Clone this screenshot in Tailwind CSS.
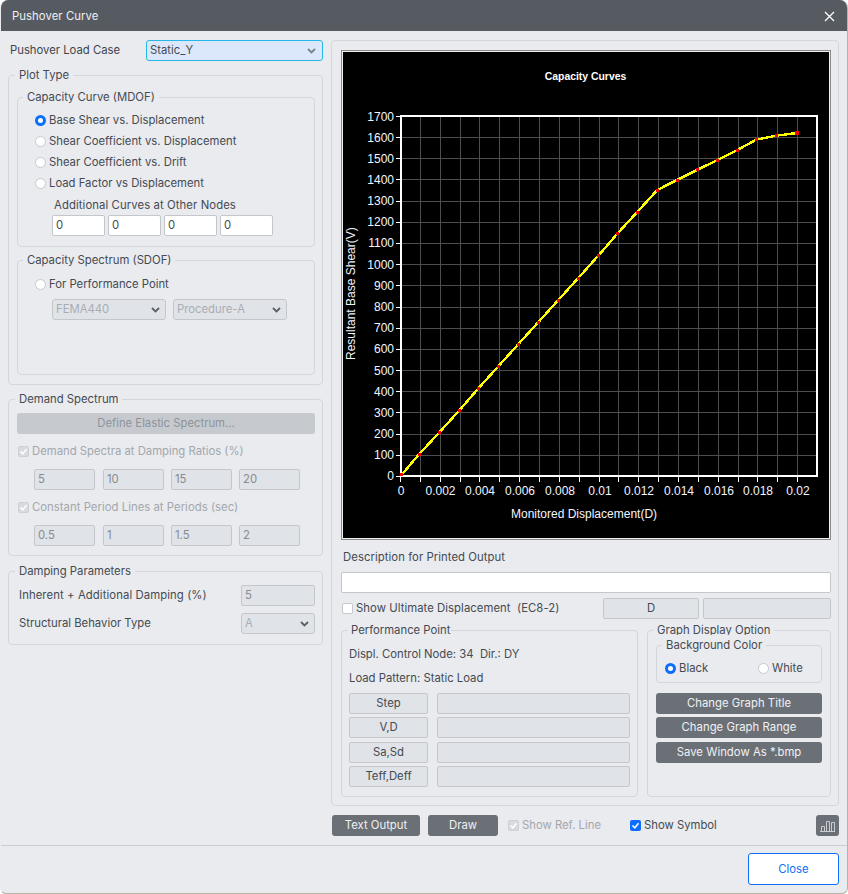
<!DOCTYPE html>
<html>
<head>
<meta charset="utf-8">
<script src="https://cdn.jsdelivr.net/npm/@tailwindcss/browser@4"></script>
</head>
<body class="bg-white">
<div class="w-[848px] h-[894px] flex flex-col bg-[#e9ebef] rounded-t-[8px] rounded-b-[6px] overflow-hidden font-['Inter',sans-serif] text-[11.3px] leading-[21px] text-[#454a52] border-r border-b border-[#b5b5a5] border-l border-l-[#e9ebef]">
  <div class="h-[31px] shrink-0 bg-[#565b62] flex items-center justify-between pl-[11px] pr-[12px] pt-px text-white">
    <span class="text-[#eef0f2] tracking-[0.08px]">Pushover Curve</span>
    <svg class="w-[11px] h-[11px]" viewBox="0 0 11 11"><path d="M1 1 L10 10 M10 1 L1 10" stroke="#ffffff" stroke-width="1.3" fill="none"/></svg>
  </div>
  <div class="flex-1 flex border-b border-[#c9ccd1]">
    <!-- left column -->
    <div class="ml-[7px] w-[315px] shrink-0">
      <div class="flex items-center mt-[9px] h-[21px]">
        <span class="ml-[2px] w-[136px] text-[#3f444c]">Pushover Load Case</span>
        <div class="w-[177px] h-[21px] flex items-center justify-between bg-[#dbe8fb] border border-[#25b8e6] rounded-[3px] pl-[3px] pr-[6px]">
          <span>Static_Y</span>
          <svg class="w-[9px] h-[6px]" viewBox="0 0 9 6"><path d="M1 1 L4.5 4.5 L8 1" stroke="#7a8087" stroke-width="1.8" fill="none"/></svg>
        </div>
      </div>

      <!-- Plot type -->
      <div class="relative mt-[14px] h-[310px] border border-[#d3d6da] rounded-[4px]">
        <span class="absolute left-[6px] -top-[11px] bg-[#e9ebef] px-[4px]">Plot Type</span>
        <div class="relative ml-[8px] mt-[21px] w-[298px] h-[150px] border border-[#d3d6da] rounded-[4px]">
          <span class="absolute left-[5px] -top-[11px] bg-[#e9ebef] px-[4px]">Capacity Curve (MDOF)</span>
          <div class="mt-[12px] ml-[17px]">
            <div class="flex items-center h-[21px]"><span class="w-[11px] h-[11px] rounded-full bg-white border-[3px] border-[#0d6efd]"></span><span class="ml-[3px]">Base Shear vs. Displacement</span></div>
            <div class="flex items-center h-[21px]"><span class="w-[11px] h-[11px] rounded-full bg-white border border-[#c6c9cd]"></span><span class="ml-[3px]">Shear Coefficient vs. Displacement</span></div>
            <div class="flex items-center h-[21px]"><span class="w-[11px] h-[11px] rounded-full bg-white border border-[#c6c9cd]"></span><span class="ml-[3px]">Shear Coefficient vs. Drift</span></div>
            <div class="flex items-center h-[21px]"><span class="w-[11px] h-[11px] rounded-full bg-white border border-[#c6c9cd]"></span><span class="ml-[3px]">Load Factor vs Displacement</span></div>
          </div>
          <div class="ml-[36px] h-[21px] leading-[22px] tracking-[0.1px]">Additional Curves at Other Nodes</div>
          <div class="ml-[34px] flex gap-[3px]">
            <div class="w-[53px] h-[21px] bg-white border border-[#c3c7cc] rounded-[2px] pl-[3px] leading-[18px]">0</div>
            <div class="w-[53px] h-[21px] bg-white border border-[#c3c7cc] rounded-[2px] pl-[3px] leading-[18px]">0</div>
            <div class="w-[53px] h-[21px] bg-white border border-[#c3c7cc] rounded-[2px] pl-[3px] leading-[18px]">0</div>
            <div class="w-[53px] h-[21px] bg-white border border-[#c3c7cc] rounded-[2px] pl-[3px] leading-[18px]">0</div>
          </div>
        </div>
        <div class="relative ml-[8px] mt-[13px] w-[298px] h-[115px] border border-[#d3d6da] rounded-[4px]">
          <span class="absolute left-[5px] -top-[11px] bg-[#e9ebef] px-[4px]">Capacity Spectrum (SDOF)</span>
          <div class="mt-[13px] ml-[17px] flex items-center h-[21px]"><span class="w-[11px] h-[11px] rounded-full bg-white border border-[#c6c9cd]"></span><span class="ml-[3px]">For Performance Point</span></div>
          <div class="mt-[4px] ml-[34px] flex gap-[7px]">
            <div class="w-[114px] h-[21px] flex items-center justify-between bg-[#e0e3e7] border border-[#c3c7cc] rounded-[3px] pl-[3px] pr-[5px] text-[#a9adb3]"><span>FEMA440</span><svg class="w-[9px] h-[6px]" viewBox="0 0 9 6"><path d="M1 1 L4.5 4.5 L8 1" stroke="#5c6168" stroke-width="1.8" fill="none"/></svg></div>
            <div class="w-[114px] h-[21px] flex items-center justify-between bg-[#e0e3e7] border border-[#c3c7cc] rounded-[3px] pl-[3px] pr-[5px] text-[#a9adb3]"><span>Procedure-A</span><svg class="w-[9px] h-[6px]" viewBox="0 0 9 6"><path d="M1 1 L4.5 4.5 L8 1" stroke="#5c6168" stroke-width="1.8" fill="none"/></svg></div>
          </div>
        </div>
      </div>

      <!-- Demand spectrum -->
      <div class="relative mt-[14px] h-[157px] border border-[#d3d6da] rounded-[4px]">
        <span class="absolute left-[6px] -top-[11px] bg-[#e9ebef] px-[4px]">Demand Spectrum</span>
        <div class="mt-[13px] ml-[8px] w-[298px] h-[21px] bg-[#c6cacf] rounded-[3px] text-center text-[#8d939a]">Define Elastic Spectrum...</div>
        <div class="mt-[7px] ml-[9px] flex items-center h-[21px] text-[#a3a7ad]">
          <span class="w-[11px] h-[11px] flex items-center justify-center bg-[#d8dade] border border-[#cdd0d4] rounded-[2px]"><svg class="w-[9px] h-[9px]" viewBox="0 0 9 9"><path d="M1.5 4.5 L3.8 6.8 L7.5 2.2" stroke="#ffffff" stroke-width="1.5" fill="none"/></svg></span>
          <span class="ml-[3px]">Demand Spectra at Damping Ratios (%)</span>
        </div>
        <div class="mt-[7px] ml-[25px] flex gap-[7px] text-[#868b92]">
          <div class="w-[61px] h-[21px] bg-[#e0e3e7] border border-[#c3c7cc] rounded-[2px] pl-[3px] leading-[19px]">5</div>
          <div class="w-[61px] h-[21px] ml-px bg-[#e0e3e7] border border-[#c3c7cc] rounded-[2px] pl-[3px] leading-[19px]">10</div>
          <div class="w-[61px] h-[21px] bg-[#e0e3e7] border border-[#c3c7cc] rounded-[2px] pl-[3px] leading-[19px]">15</div>
          <div class="w-[61px] h-[21px] bg-[#e0e3e7] border border-[#c3c7cc] rounded-[2px] pl-[3px] leading-[19px]">20</div>
        </div>
        <div class="mt-[7px] ml-[9px] flex items-center h-[21px] text-[#a3a7ad]">
          <span class="w-[11px] h-[11px] flex items-center justify-center bg-[#d8dade] border border-[#cdd0d4] rounded-[2px]"><svg class="w-[9px] h-[9px]" viewBox="0 0 9 9"><path d="M1.5 4.5 L3.8 6.8 L7.5 2.2" stroke="#ffffff" stroke-width="1.5" fill="none"/></svg></span>
          <span class="ml-[3px] tracking-[0.04px]">Constant Period Lines at Periods (sec)</span>
        </div>
        <div class="mt-[7px] ml-[25px] flex gap-[7px] text-[#868b92]">
          <div class="w-[61px] h-[21px] bg-[#e0e3e7] border border-[#c3c7cc] rounded-[2px] pl-[3px] leading-[19px]">0.5</div>
          <div class="w-[61px] h-[21px] ml-px bg-[#e0e3e7] border border-[#c3c7cc] rounded-[2px] pl-[3px] leading-[19px]">1</div>
          <div class="w-[61px] h-[21px] bg-[#e0e3e7] border border-[#c3c7cc] rounded-[2px] pl-[3px] leading-[19px]">1.5</div>
          <div class="w-[61px] h-[21px] bg-[#e0e3e7] border border-[#c3c7cc] rounded-[2px] pl-[3px] leading-[19px]">2</div>
        </div>
      </div>

      <!-- Damping -->
      <div class="relative mt-[15px] h-[74px] border border-[#d3d6da] rounded-[4px]">
        <span class="absolute left-[6px] -top-[11px] bg-[#e9ebef] px-[4px]">Damping Parameters</span>
        <div class="mt-[13px] pl-[10px] pr-[7px] flex items-center justify-between h-[21px]">
          <span class="tracking-[0.1px]">Inherent + Additional Damping (%)</span>
          <div class="w-[74px] h-[21px] bg-[#e0e3e7] border border-[#c3c7cc] rounded-[2px] pl-[3px] leading-[19px] text-[#868b92]">5</div>
        </div>
        <div class="mt-[7px] pl-[10px] pr-[7px] flex items-center justify-between h-[21px]">
          <span>Structural Behavior Type</span>
          <div class="w-[74px] h-[21px] flex items-center justify-between bg-[#e0e3e7] border border-[#c3c7cc] rounded-[3px] pl-[3px] pr-[5px] text-[#a9adb3]"><span>A</span><svg class="w-[9px] h-[6px]" viewBox="0 0 9 6"><path d="M1 1 L4.5 4.5 L8 1" stroke="#5c6168" stroke-width="1.8" fill="none"/></svg></div>
        </div>
      </div>
    </div>

    <!-- right column -->
    <div class="ml-[8px] w-[508px] shrink-0">
      <div class="mt-[9px] h-[766px] border border-[#d3d6da] rounded-[4px]">
        <svg class="block mt-[9px] ml-[9px] w-[490px] h-[490px] font-['Liberation_Sans',sans-serif]" viewBox="341 50 490 490">
          <rect x="341" y="50" width="490" height="490" fill="#000000"/>
          <rect x="341.5" y="50.5" width="489" height="489" fill="none" stroke="#8a8a8a"/>
          <rect x="342.5" y="51.5" width="487" height="487" fill="none" stroke="#f0f0f0"/>
          <text x="585.5" y="79.5" text-anchor="middle" class="fill-white text-[10.4px] font-bold">Capacity Curves</text>
          <path d="M420.5 116V476M440.5 116V476M460.5 116V476M479.5 116V476M499.5 116V476M519.5 116V476M539.5 116V476M559.5 116V476M579.5 116V476M599.5 116V476M618.5 116V476M638.5 116V476M658.5 116V476M678.5 116V476M698.5 116V476M718.5 116V476M738.5 116V476M757.5 116V476M777.5 116V476M797.5 116V476M400 455.5H817M400 434.5H817M400 412.5H817M400 391.5H817M400 370.5H817M400 349.5H817M400 328.5H817M400 307.5H817M400 285.5H817M400 264.5H817M400 243.5H817M400 222.5H817M400 201.5H817M400 179.5H817M400 158.5H817M400 137.5H817" stroke="#4d4d4d" fill="none"/>
          <rect x="401" y="116" width="416" height="360" fill="none" stroke="#ffffff" stroke-width="2"/>
          <path d="M396 116.5H400M396 137.5H400M396 158.5H400M396 179.5H400M396 201.5H400M396 222.5H400M396 243.5H400M396 264.5H400M396 285.5H400M396 307.5H400M396 328.5H400M396 349.5H400M396 370.5H400M396 391.5H400M396 412.5H400M396 434.5H400M396 455.5H400M396 476.5H400M400.5 476V482M420.5 476V482M440.5 476V482M460.5 476V482M479.5 476V482M499.5 476V482M519.5 476V482M539.5 476V482M559.5 476V482M579.5 476V482M599.5 476V482M618.5 476V482M638.5 476V482M658.5 476V482M678.5 476V482M698.5 476V482M718.5 476V482M738.5 476V482M757.5 476V482M777.5 476V482M797.5 476V482" stroke="#ffffff" fill="none"/>
          <polyline points="401.5,475 419.3,454 439.7,432 459.7,410 478.7,388 498.6,366 518.5,344 538.5,322 558.4,300 578.3,278 598.3,255.7 617.3,233.7 637.3,212 657.3,190 677,180 697.7,169.7 717.3,160 737.3,150 756.3,139.7 776.3,135.7 797,133" fill="none" stroke="#ffff00" stroke-width="2.4" shape-rendering="crispEdges"/>
          <g fill="#ff0000">
            <rect x="400" y="473" width="3" height="3"/><rect x="418" y="453" width="3" height="3"/><rect x="438" y="431" width="3" height="3"/><rect x="458" y="409" width="3" height="3"/><rect x="477" y="387" width="3" height="3"/><rect x="497" y="365" width="3" height="3"/><rect x="517" y="343" width="3" height="3"/><rect x="537" y="321" width="3" height="3"/><rect x="557" y="299" width="3" height="3"/><rect x="577" y="277" width="3" height="3"/><rect x="597" y="254" width="3" height="3"/><rect x="616" y="232" width="3" height="3"/><rect x="636" y="211" width="3" height="3"/><rect x="656" y="189" width="3" height="3"/><rect x="676" y="179" width="3" height="3"/><rect x="696" y="168" width="3" height="3"/><rect x="716" y="159" width="3" height="3"/><rect x="736" y="149" width="3" height="3"/><rect x="755" y="138" width="3" height="3"/><rect x="775" y="134" width="3" height="3"/><rect x="795" y="131" width="4" height="4"/>
          </g>
          <g text-anchor="end" class="fill-[#f2f6ff] text-[12px]">
            <text x="394" y="121">1700</text><text x="394" y="142">1600</text><text x="394" y="163">1500</text><text x="394" y="184">1400</text><text x="394" y="205">1300</text><text x="394" y="226">1200</text><text x="394" y="247">1100</text><text x="394" y="269">1000</text><text x="394" y="290">900</text><text x="394" y="311">800</text><text x="394" y="332">700</text><text x="394" y="353">600</text><text x="394" y="375">500</text><text x="394" y="396">400</text><text x="394" y="417">300</text><text x="394" y="438">200</text><text x="394" y="459">100</text><text x="394" y="480">0</text>
          </g>
          <g text-anchor="middle" class="fill-[#f2f6ff] text-[12px]">
            <text x="401" y="494.5">0</text><text x="440.5" y="494.5">0.002</text><text x="480" y="494.5">0.004</text><text x="520" y="494.5">0.006</text><text x="560" y="494.5">0.008</text><text x="600" y="494.5">0.01</text><text x="639" y="494.5">0.012</text><text x="679" y="494.5">0.014</text><text x="719" y="494.5">0.016</text><text x="758" y="494.5">0.018</text><text x="798" y="494.5">0.02</text>
          </g>
          <text x="511" y="518" class="fill-[#f2f6ff] text-[12px]">Monitored Displacement(D)</text>
          <text transform="translate(355 360) rotate(-90)" class="fill-[#f2f6ff] text-[12px]">Resultant Base Shear(V)</text>
        </svg>
        <div class="mt-[7px] ml-[11px] h-[20px] leading-[20px] tracking-[0.07px]">Description for Printed Output</div>
        <div class="mt-[5px] ml-[9px] w-[490px] h-[21px] bg-white border border-[#c3c7cc] rounded-[2px]"></div>
        <div class="mt-[5px] ml-[10px] flex items-center h-[21px]">
          <span class="w-[11px] h-[11px] bg-white border border-[#c6c9cd] rounded-[2px]"></span>
          <span class="ml-[3px] whitespace-pre tracking-[0.06px]">Show Ultimate Displacement  (EC8-2)</span>
          <div class="ml-auto w-[96px] h-[21px] bg-[#e0e3e7] border border-[#c3c7cc] rounded-[2px] text-center leading-[19px]">D</div>
          <div class="ml-[4px] mr-[7px] w-[128px] h-[21px] bg-[#e0e3e7] border border-[#c3c7cc] rounded-[2px]"></div>
        </div>
        <div class="mt-[11px] ml-[9px] flex gap-[9px]">
          <div class="relative w-[297px] h-[167px] border border-[#d3d6da] rounded-[4px]">
            <span class="absolute left-[6px] -top-[11px] bg-[#e9ebef] pl-[3px] pr-[1px]">Performance Point</span>
            <div class="mt-[13px] ml-[7px] h-[20px] leading-[20px]">Displ. Control Node: 34&nbsp; Dir.: DY</div>
            <div class="mt-[4px] ml-[7px] h-[20px] leading-[20px]">Load Pattern: Static Load</div>
            <div class="mt-[5px] ml-[7px] flex gap-[9px]">
              <div class="w-[79px] h-[21px] bg-[#e0e3e7] border border-[#c3c7cc] rounded-[2px] text-center leading-[19px]">Step</div>
              <div class="w-[193px] h-[21px] bg-[#e0e3e7] border border-[#c3c7cc] rounded-[2px]"></div>
            </div>
            <div class="mt-[3px] ml-[7px] flex gap-[9px]">
              <div class="w-[79px] h-[21px] bg-[#e0e3e7] border border-[#c3c7cc] rounded-[2px] text-center leading-[19px]">V,D</div>
              <div class="w-[193px] h-[21px] bg-[#e0e3e7] border border-[#c3c7cc] rounded-[2px]"></div>
            </div>
            <div class="mt-[4px] ml-[7px] flex gap-[9px]">
              <div class="w-[79px] h-[21px] bg-[#e0e3e7] border border-[#c3c7cc] rounded-[2px] text-center leading-[19px]">Sa,Sd</div>
              <div class="w-[193px] h-[21px] bg-[#e0e3e7] border border-[#c3c7cc] rounded-[2px]"></div>
            </div>
            <div class="mt-[3px] ml-[7px] flex gap-[9px]">
              <div class="w-[79px] h-[21px] bg-[#e0e3e7] border border-[#c3c7cc] rounded-[2px] text-center leading-[19px]">Teff,Deff</div>
              <div class="w-[193px] h-[21px] bg-[#e0e3e7] border border-[#c3c7cc] rounded-[2px]"></div>
            </div>
          </div>
          <div class="relative w-[184px] h-[167px] border border-[#d3d6da] rounded-[4px]">
            <span class="absolute left-[5px] -top-[11px] bg-[#e9ebef] px-[4px]">Graph Display Option</span>
            <div class="relative mt-[14px] ml-[8px] w-[166px] h-[38px] border border-[#d3d6da] rounded-[4px]">
              <span class="absolute left-[5px] -top-[11px] bg-[#e9ebef] px-[4px]">Background Color</span>
              <div class="mt-[12px] ml-[8px] flex items-center h-[21px]">
                <div class="flex items-center w-[93px]"><span class="w-[11px] h-[11px] rounded-full bg-white border-[3px] border-[#0d6efd]"></span><span class="ml-[3px]">Black</span></div>
                <div class="flex items-center"><span class="w-[11px] h-[11px] rounded-full bg-white border border-[#c6c9cd]"></span><span class="ml-[3px]">White</span></div>
              </div>
            </div>
            <div class="mt-[10px] ml-[8px] w-[166px] h-[21px] bg-[#6b7077] rounded-[3px] text-center text-[#f0f1f3] tracking-[0.04px]">Change Graph Title</div>
            <div class="mt-[3px] ml-[8px] w-[166px] h-[21px] bg-[#6b7077] rounded-[3px] text-center text-[#f0f1f3] tracking-[0.04px]">Change Graph Range</div>
            <div class="mt-[4px] ml-[8px] w-[166px] h-[21px] bg-[#6b7077] rounded-[3px] text-center text-[#f0f1f3] tracking-[0.04px]">Save Window As *.bmp</div>
          </div>
        </div>
      </div>
      <div class="mt-[9px] h-[21px] flex items-center">
        <div class="ml-px w-[88px] h-[21px] bg-[#6b7077] rounded-[3px] text-center text-[#f0f1f3]">Text Output</div>
        <div class="ml-[8px] w-[70px] h-[21px] bg-[#6b7077] rounded-[3px] text-center text-[#f0f1f3]">Draw</div>
        <span class="ml-[10px] w-[11px] h-[11px] flex items-center justify-center bg-[#d8dade] border border-[#cdd0d4] rounded-[2px]"><svg class="w-[9px] h-[9px]" viewBox="0 0 9 9"><path d="M1.5 4.5 L3.8 6.8 L7.5 2.2" stroke="#ffffff" stroke-width="1.5" fill="none"/></svg></span>
        <span class="ml-[3px] w-[108px] text-[#a3a7ad]">Show Ref. Line</span>
        <span class="w-[11px] h-[11px] flex items-center justify-center bg-[#0d6efd] rounded-[2px]"><svg class="w-[9px] h-[9px]" viewBox="0 0 9 9"><path d="M1.5 4.5 L3.8 6.8 L7.5 2.2" stroke="#ffffff" stroke-width="1.5" fill="none"/></svg></span>
        <span class="ml-[3px]">Show Symbol</span>
        <div class="ml-auto w-[23px] h-[21px] flex items-center justify-center bg-[#6b7077] rounded-[3px]">
          <svg class="w-[15px] h-[13px]" viewBox="0 0 15 13"><path d="M1.5 12.5V7.5H4.5V12.5M6.5 12.5V2.5H9.5V12.5M11.5 12.5V3.5H14.5V12.5M0 12.5H15" stroke="#c9ccd0" fill="none"/></svg>
        </div>
      </div>
    </div>
  </div>
  <div class="h-[47px] shrink-0 flex justify-end items-start pt-[7px] pr-[8px]">
    <div class="w-[91px] h-[32px] bg-white border border-[#0d6efd] rounded-[3px] text-center leading-[30px] text-[#0d6efd]">Close</div>
  </div>
</div>
</body>
</html>
